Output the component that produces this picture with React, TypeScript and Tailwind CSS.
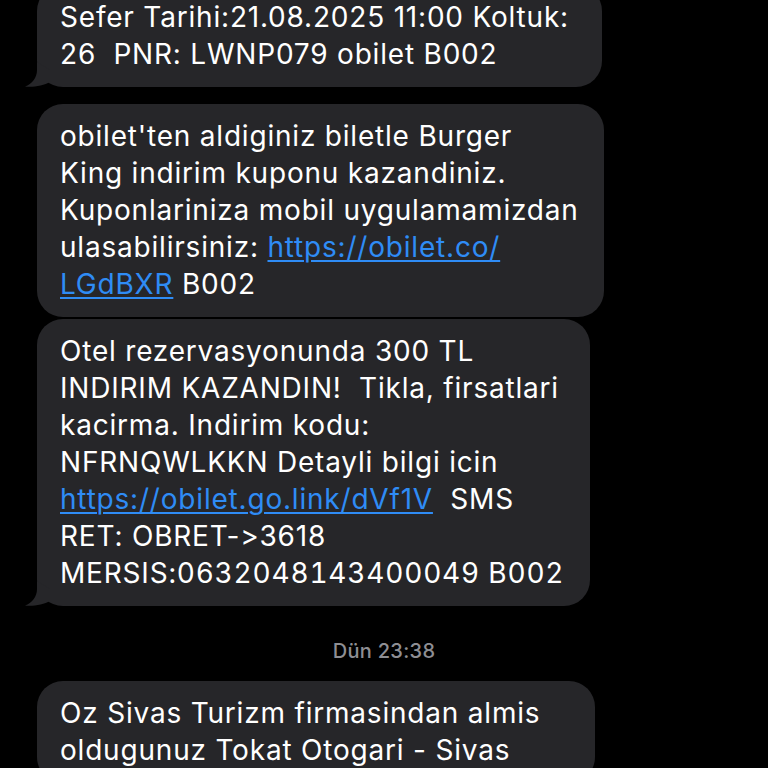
const bubble = 'relative bg-[#262629] rounded-[26px] pl-[23px] pr-[20px] py-[14px] text-white text-[28px] leading-[37px] tracking-[0.8px] whitespace-nowrap [font-feature-settings:"calt"_0]'
const link = 'text-[#2f8cf5] underline decoration-2 underline-offset-[3px]'

function Tail() {
  return (
    <svg
      className="absolute left-[-12px] bottom-[-1px]"
      width="26"
      height="28"
      viewBox="0 0 26 28"
    >
      <path d="M12 2 L12 10 C12 18 7 24 0 26.5 C8 27.5 19 25.5 25 22 L25 10 Z" fill="#262629" />
    </svg>
  )
}

export default function App() {
  return (
    <div className="h-[768px] w-[768px] overflow-hidden bg-black font-['Inter',sans-serif]">
      <div className="flex flex-col items-start pl-[37px]">
        {/* last lines of previous message */}
        <div className={`${bubble} -mt-[15px] w-[565px]`}>
          <div>Sefer Tarihi:21.08.2025 11:00 Koltuk:</div>
          <div>26&nbsp; PNR: LWNP079 obilet B002</div>
          <Tail />
        </div>

        <div className={`${bubble} mt-[17px] w-[567px]`}>
          <div>obilet'ten aldiginiz biletle Burger</div>
          <div>King indirim kuponu kazandiniz.</div>
          <div>Kuponlariniza mobil uygulamamizdan</div>
          <div>
            ulasabilirsiniz: <span className={link}>https://obilet.co/</span>
          </div>
          <div>
            <span className={link}>LGdBXR</span> B002
          </div>
        </div>

        <div className={`${bubble} mt-[2px] w-[553px]`}>
          <div>Otel rezervasyonunda 300 TL</div>
          <div>INDIRIM KAZANDIN!&nbsp; Tikla, firsatlari</div>
          <div>kacirma. Indirim kodu:</div>
          <div>NFRNQWLKKN Detayli bilgi icin</div>
          <div>
            <span className={link}>https://obilet.go.link/dVf1V</span>&nbsp; SMS
          </div>
          <div>RET: OBRET-&gt;3618</div>
          <div className="tabular-nums">MERSIS:0632048143400049 B002</div>
          <Tail />
        </div>

        <div className="mt-[33px] self-stretch pr-[37px] text-center text-[20px] leading-[24px] font-medium tracking-[0.3px] text-[#8e8e93]">
          Dün 23:38
        </div>

        <div className={`${bubble} mt-[18px] w-[558px]`}>
          <div>Oz Sivas Turizm firmasindan almis</div>
          <div>oldugunuz Tokat Otogari - Sivas</div>
        </div>
      </div>
    </div>
  )
}
